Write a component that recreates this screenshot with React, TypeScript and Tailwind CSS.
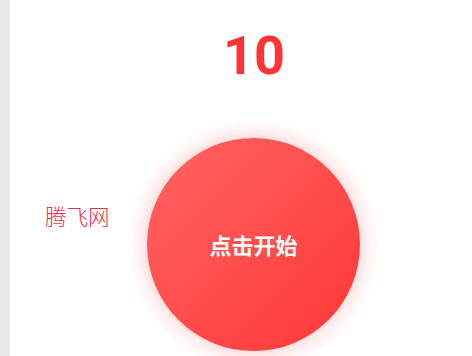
import React from 'react';

const App: React.FC = () => {
  return (
    <div className="flex w-[472px] h-[356px] overflow-hidden bg-white font-['Roboto','Noto_Sans_CJK_SC',sans-serif]">
      <div className="w-[10px] shrink-0 bg-[#e8e8e8]" />
      <div className="flex flex-col flex-1">
        <div className="mt-[29px] pl-[26px] text-center text-[54px] leading-none font-bold text-[#ff3333]">10</div>
        <div className="flex items-start mt-[55px]">
          <span className="w-[64px] shrink-0 ml-[35px] mt-[63px] text-[21.5px] leading-[30px] font-light whitespace-nowrap text-[#f52d4c] font-['Noto_Sans_CJK_SC',sans-serif]">
            腾飞网
          </span>
          <button className="ml-[38px] w-[213px] h-[213px] shrink-0 rounded-full bg-gradient-to-br from-[#ff6262] to-[#ff3434] shadow-[0_0_22px_rgba(255,70,70,0.35)] flex items-center justify-center">
            <span className="text-[22px] font-bold text-white font-['Noto_Sans_CJK_SC',sans-serif]">点击开始</span>
          </button>
        </div>
      </div>
    </div>
  );
};

export default App;
